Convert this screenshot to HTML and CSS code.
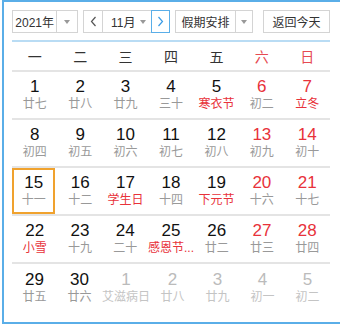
FILE: index.html
```html
<!doctype html>
<html>
<head>
<meta charset="utf-8">
<title>日历</title>
<link rel="stylesheet" href="styles.css">
</head>
<body>
<div class="cal">
	<div class="bar">
		<div class="sel year"><span class="val">2021年</span><span class="drop"><i class="caret"></i></span></div>
		<div class="month">
			<span class="arr prev"><svg width="7" height="11" viewBox="0 0 7 11"><path d="M5.5 1 L1.5 5.5 L5.5 10" fill="none" stroke="#555" stroke-width="1.2"/></svg></span>
			<span class="mon"><span class="val">11月</span><i class="caret"></i></span>
			<span class="arr next"><svg width="7" height="11" viewBox="0 0 7 11"><path d="M1.5 1 L5.5 5.5 L1.5 10" fill="none" stroke="#3a9be6" stroke-width="1.2"/></svg></span>
		</div>
		<div class="sel hol"><span class="val">假期安排</span><span class="drop"><i class="caret"></i></span></div>
		<div class="btn">返回今天</div>
	</div>

	<div class="week">
		<span>一</span><span>二</span><span>三</span><span>四</span><span>五</span><span class="red">六</span><span class="red">日</span>
	</div>

	<div class="row">
		<div class="day"><b>1</b><em>廿七</em></div>
		<div class="day"><b>2</b><em>廿八</em></div>
		<div class="day"><b>3</b><em>廿九</em></div>
		<div class="day"><b>4</b><em>三十</em></div>
		<div class="day"><b>5</b><em class="fest">寒衣节</em></div>
		<div class="day wk"><b>6</b><em>初二</em></div>
		<div class="day wk"><b>7</b><em class="fest">立冬</em></div>
	</div>
	<div class="row">
		<div class="day"><b>8</b><em>初四</em></div>
		<div class="day"><b>9</b><em>初五</em></div>
		<div class="day"><b>10</b><em>初六</em></div>
		<div class="day"><b>11</b><em>初七</em></div>
		<div class="day"><b>12</b><em>初八</em></div>
		<div class="day wk"><b>13</b><em>初九</em></div>
		<div class="day wk"><b>14</b><em>初十</em></div>
	</div>
	<div class="row">
		<div class="day on"><b>15</b><em>十一</em></div>
		<div class="day"><b>16</b><em>十二</em></div>
		<div class="day"><b>17</b><em class="fest">学生日</em></div>
		<div class="day"><b>18</b><em>十四</em></div>
		<div class="day"><b>19</b><em class="fest">下元节</em></div>
		<div class="day wk"><b>20</b><em>十六</em></div>
		<div class="day wk"><b>21</b><em>十七</em></div>
	</div>
	<div class="row">
		<div class="day"><b>22</b><em class="fest">小雪</em></div>
		<div class="day"><b>23</b><em>十九</em></div>
		<div class="day"><b>24</b><em>二十</em></div>
		<div class="day"><b>25</b><em class="fest">感恩节...</em></div>
		<div class="day"><b>26</b><em>廿二</em></div>
		<div class="day wk"><b>27</b><em>廿三</em></div>
		<div class="day wk"><b>28</b><em>廿四</em></div>
	</div>
	<div class="row last">
		<div class="day"><b>29</b><em>廿五</em></div>
		<div class="day"><b>30</b><em>廿六</em></div>
		<div class="day other"><b>1</b><em>艾滋病日</em></div>
		<div class="day other"><b>2</b><em>廿八</em></div>
		<div class="day other"><b>3</b><em>廿九</em></div>
		<div class="day other"><b>4</b><em>初一</em></div>
		<div class="day other"><b>5</b><em>初二</em></div>
	</div>
</div>
</body>
</html>
```

FILE: styles.css
```css
html,body{margin:0; padding:0; overflow:hidden; background:#fff;}
body{font-family:"Liberation Sans","Noto Sans CJK SC",sans-serif; color:#333;}
.cal{width:350px; height:324px; margin-left:2px; border:2px solid #5aaee8; box-sizing:border-box; padding:8px 0 0 8px;}

.bar{display:flex; height:23px; width:318px; white-space:nowrap;}
.sel,.btn{height:23px; box-sizing:border-box; border:1px solid #d4d4d4; background:#fff; display:flex; align-items:center; font-size:12px; color:#333;}
.sel .val{display:flex; align-items:center; justify-content:center; height:100%;}
.sel .drop{display:flex; align-items:center; justify-content:center; height:100%; border-left:1px solid #d4d4d4;}
.caret{display:block; flex:none; width:0; height:0; border-top:4px solid #999; border-left:3px solid transparent; border-right:3px solid transparent;}
.year{width:66px;}
.year .val{width:44px;}
.year .drop{width:20px;}

.month{display:flex; margin-left:5px; width:87px; height:23px; font-size:12px; color:#333;}
.arr{display:flex; flex:none; align-items:center; justify-content:center; height:23px; box-sizing:border-box; border:1px solid #d4d4d4; width:20px;}
.mon{display:flex; flex:none; align-items:center; height:23px; box-sizing:border-box; border-top:1px solid #d4d4d4; border-bottom:1px solid #d4d4d4; width:48px; padding-left:8px;}
.mon .caret{margin-left:5px;}
.arr.next{width:19px; border-color:#5aaee8;}

.hol{margin-left:5px; width:78px;}
.hol .val{width:60px;}
.hol .drop{width:16px;}

.btn{margin-left:10px; width:67px; justify-content:center;}

.week{display:grid; grid-template-columns:repeat(7,1fr); width:318px; margin-top:7px; border-top:2px solid #b9dcf4; border-bottom:2px solid #e4e4e4; height:32px; box-sizing:border-box;}
.week span{display:flex; align-items:center; justify-content:center; font-size:14px; color:#333;}
.week .red{color:#e64a52;}

.row{display:grid; grid-template-columns:repeat(7,1fr); width:318px; height:48px; border-bottom:2px solid #e4e4e4; box-sizing:border-box;}
.row.last{border-bottom:0;}
.day{display:flex; flex-direction:column; align-items:center; justify-content:center; box-sizing:border-box;}
.day b{font-weight:normal; font-size:17px; line-height:18px; color:#111;}
.day em{font-style:normal; font-size:12px; line-height:16px; color:#999; white-space:nowrap;}
.day.wk b{color:#e8323a;}
.day em.fest{color:#e8323a;}
.day.other b{color:#bbb;}
.day.other em{color:#c4c4c4;}
.day.on{border:2px solid #f0a22e; margin-right:2px;}
```
